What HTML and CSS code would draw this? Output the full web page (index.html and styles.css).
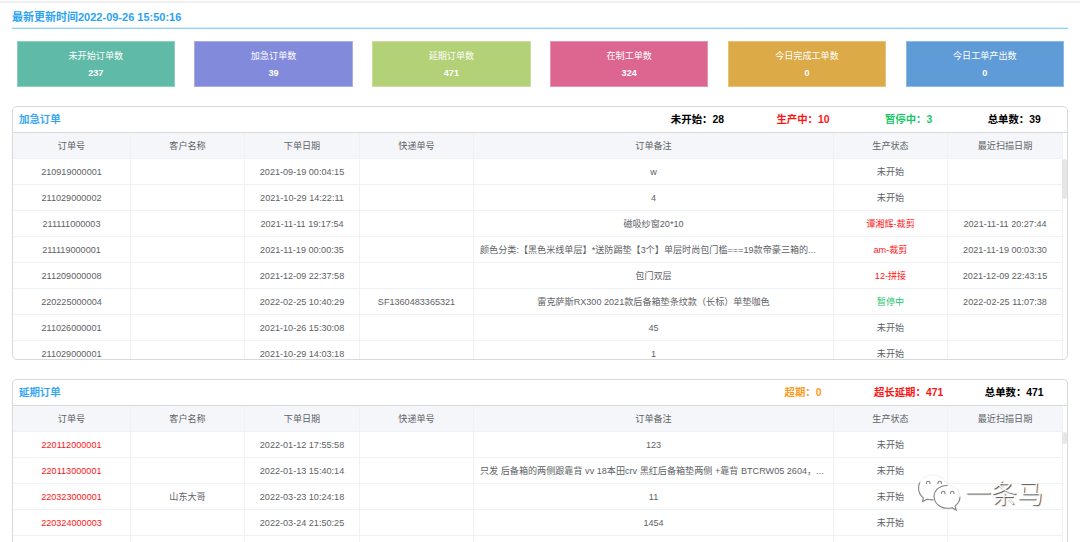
FILE: index.html
```html
<!DOCTYPE html>
<html lang="zh-CN">
<head>
  <meta charset="UTF-8">
  <title>订单看板</title>
  <link rel="stylesheet" href="styles.css">
</head>
<body>
  <div class="topline"></div>
  <h1 class="update-time">最新更新时间2022-09-26 15:50:16</h1>

  <div class="cards">
    <div class="card green"><span>未开始订单数</span><b>237</b></div>
    <div class="card purple"><span>加急订单数</span><b>39</b></div>
    <div class="card lime"><span>延期订单数</span><b>471</b></div>
    <div class="card pink"><span>在制工单数</span><b>324</b></div>
    <div class="card orange"><span>今日完成工单数</span><b>0</b></div>
    <div class="card blue"><span>今日工单产出数</span><b>0</b></div>
  </div>

  <!-- 加急订单 -->
  <div class="panel urgent">
    <div class="panel-head">
      <h2>加急订单</h2>
      <span class="total">未开始：28</span>
      <span class="total red">生产中：10</span>
      <span class="total ok">暂停中：3</span>
      <span class="total">总单数：39</span>
    </div>
    <table>
      <colgroup>
        <col class="c-no"><col class="c-name"><col class="c-date"><col class="c-name"><col class="c-note"><col class="c-name"><col class="c-date">
      </colgroup>
      <thead>
        <tr><th>订单号</th><th>客户名称</th><th>下单日期</th><th>快递单号</th><th>订单备注</th><th>生产状态</th><th>最近扫描日期</th></tr>
      </thead>
      <tbody>
        <tr><td>210919000001</td><td></td><td>2021-09-19 00:04:15</td><td></td><td>w</td><td>未开始</td><td></td></tr>
        <tr><td>211029000002</td><td></td><td>2021-10-29 14:22:11</td><td></td><td>4</td><td>未开始</td><td></td></tr>
        <tr><td>211111000003</td><td></td><td>2021-11-11 19:17:54</td><td></td><td>磁吸纱窗20*10</td><td class="red">谭湘辉-裁剪</td><td>2021-11-11 20:27:44</td></tr>
        <tr><td>211119000001</td><td></td><td>2021-11-19 00:00:35</td><td></td><td class="long">颜色分类:【黑色米线单层】*送防踢垫【3个】单层时尚包门槛===19款帝豪三箱的...</td><td class="red">am-裁剪</td><td>2021-11-19 00:03:30</td></tr>
        <tr><td>211209000008</td><td></td><td>2021-12-09 22:37:58</td><td></td><td>包门双层</td><td class="red">12-拼接</td><td>2021-12-09 22:43:15</td></tr>
        <tr><td>220225000004</td><td></td><td>2022-02-25 10:40:29</td><td>SF1360483365321</td><td>雷克萨斯RX300 2021款后备箱垫条纹款（长标）单垫咖色</td><td class="ok">暂停中</td><td>2022-02-25 11:07:38</td></tr>
        <tr><td>211026000001</td><td></td><td>2021-10-26 15:30:08</td><td></td><td>45</td><td>未开始</td><td></td></tr>
        <tr class="last"><td>211029000001</td><td></td><td>2021-10-29 14:03:18</td><td></td><td>1</td><td>未开始</td><td></td></tr>
      </tbody>
    </table>
    <div class="thumb"></div>
  </div>

  <!-- 延期订单 -->
  <div class="panel delayed">
    <div class="panel-head">
      <h2>延期订单</h2>
      <span class="total warn">超期：0</span>
      <span class="total red">超长延期：471</span>
      <span class="total">总单数：471</span>
    </div>
    <table>
      <colgroup>
        <col class="c-no"><col class="c-name"><col class="c-date"><col class="c-name"><col class="c-note"><col class="c-name"><col class="c-date">
      </colgroup>
      <thead>
        <tr><th>订单号</th><th>客户名称</th><th>下单日期</th><th>快递单号</th><th>订单备注</th><th>生产状态</th><th>最近扫描日期</th></tr>
      </thead>
      <tbody>
        <tr><td class="red">220112000001</td><td></td><td>2022-01-12 17:55:58</td><td></td><td>123</td><td>未开始</td><td></td></tr>
        <tr><td class="red">220113000001</td><td></td><td>2022-01-13 15:40:14</td><td></td><td class="long">只发 后备箱的两侧跟靠背 vv 18本田crv 黑红后备箱垫两侧 +靠背 BTCRW05 2604，...</td><td>未开始</td><td></td></tr>
        <tr><td class="red">220323000001</td><td>山东大哥</td><td>2022-03-23 10:24:18</td><td></td><td>11</td><td>未开始</td><td></td></tr>
        <tr><td class="red">220324000003</td><td></td><td>2022-03-24 21:50:25</td><td></td><td>1454</td><td>未开始</td><td></td></tr>
        <tr class="cut"><td></td><td></td><td></td><td></td><td></td><td></td><td></td></tr>
      </tbody>
    </table>
    <div class="thumb"></div>
  </div>

  <div class="watermark">
    <svg width="45" height="40" viewBox="0 0 45 40">
      <g class="bubble">
        <path d="M16 2C8 2 1.500 7.500 1.500 14.500c0 4 2 7.500 5.500 9.700L5.500 28.500l5-2.500c2 .6 4 .8 6 .7C30 26 31 21 30.500 13 29 6 23 2 16 2z"/>
        <path d="M30 12.500c-7.500 0-13 5-13 11.300S22.500 35.500 30 35.500c1.800 0 3.400-.3 5-.8l4.200 2.300-1.200-4c3-2.200 5-5.400 5-9.200 0-6.300-5.500-11.300-13-11.300z"/>
      </g>
      <path class="arc" d="M6.500 25c-3.500-2.500-5-6-5-10 0-2 .6-4 1.600-5.700M6.500 25l-1 3.500 5-2.300c2 .6 4 .8 6 .6M17.500 26c-2-7 3.500-13.500 13-13.500M17.300 25.500c1.200 6.500 8.700 11.500 17.700 9.200l4.200 2.300-1.200-4c3-2.200 5-5.400 5-9.200"/>
      <path class="eyes" d="M9.500 11v-1c0-2.400 3.500-2.400 3.500 0v1M21 11v-1c0-2.400 3.500-2.400 3.500 0v1M24.500 21v-1c0-2.400 3.500-2.400 3.500 0v1M33.500 21v-1c0-2.400 3.500-2.400 3.500 0v1"/>
    </svg>
    <span>一条马</span>
  </div>
</body>
</html>
```
FILE: styles.css
```css
* {
  box-sizing: border-box;
}
body {
  margin: 0;
  height: 542px;
  padding: 1px 12px 0;
  overflow: hidden;
  position: relative;
  background: #fff;
  color: #606266;
  font-family: "Liberation Sans", "Noto Sans CJK SC", sans-serif;
  font-size: 9.1px;
}
.topline {
  height: 2px;
  margin: 0 -12px;
  background: #f1f1f1;
}
.update-time {
  margin: 0;
  height: 26px;
  padding-top: 2px;
  border-bottom: 1px solid #8ed0fa;
  box-shadow: inset 0 -1px #d9f0fd;
  color: #2ba3f3;
  font-size: 11px;
  line-height: 25px;
}

/* 统计卡片 */
.cards {
  display: grid;
  grid-template-columns: repeat(6, 1fr);
  gap: 19.4px;
  padding: 12px 4px 0 4.600px;
}
.card {
  display: flex;
  flex-direction: column;
  align-items: center;
  height: 46px;
  padding-top: 6px;
  border: 1px solid rgba(255, 255, 255, 0.3);
  color: #fff;
  line-height: 17px;
}
.green { background: #5fbba8; }
.purple { background: #828bdb; }
.lime { background: #b3d176; }
.pink { background: #dd6690; }
.orange { background: #dcaa46; }
.blue { background: #5f9bd7; }

/* 订单表格 */
.panel {
  position: relative;
  overflow: hidden;
  border: 1px solid #d8d9da;
  border-radius: 5px;
}
.urgent {
  height: 254px;
  margin-top: 19px;
}
.delayed {
  height: 163px;
  margin-top: 19px;
  border-bottom: none;
  border-radius: 5px 5px 0 0;
}
.panel-head {
  display: flex;
  align-items: center;
  height: 26px;
  padding-bottom: 2px;
  border-bottom: 1px solid #d8d9da;
  font-size: 10.4px;
}
.panel-head h2 {
  flex: 1;
  margin: 0;
  padding-left: 6px;
  color: #2ba3f3;
  font-size: 10.4px;
  font-weight: 500;
  -webkit-text-stroke: 0.2px #2ba3f3;
}
.total {
  width: 105.6px;
  color: #000;
  font-weight: bold;
  text-align: center;
}
table {
  width: 1050px;
  table-layout: fixed;
  border-collapse: separate;
  border-spacing: 0;
}
.c-no { width: 118px; }
.c-name { width: 114px; }
.c-date { width: 115px; }
.c-note { width: 360px; }
th, td {
  height: 26px;
  padding: 0 6px;
  border-right: 1px solid #eff1f8;
  border-bottom: 1px solid #eff1f8;
  line-height: 14px;
  text-align: center;
  white-space: nowrap;
}
th {
  background: #f5f6fa;
  font-weight: normal;
}
.last td {
  height: 21px;
  padding-bottom: 1px;
  border-bottom: none;
  vertical-align: bottom;
}
.cut td {
  height: 6px;
  border-bottom: none;
}
.long {
  text-align: left;
}
.total.red, td.red { color: #ff1414; }
.total.ok, td.ok { color: #1bc76b; }
.total.warn { color: #ff9a1c; }
.thumb {
  position: absolute;
  top: 52px;
  right: 0;
  width: 5px;
  height: 40px;
  border-radius: 3px;
  background: #e6e6e6;
}
.delayed .thumb {
  height: 12px;
}

.watermark {
  position: absolute;
  left: 917px;
  top: 473px;
  display: flex;
  align-items: center;
  gap: 3px;
  color: #fff;
  font-family: "Noto Sans CJK SC", sans-serif;
  font-size: 26px;
  font-weight: 300;
  line-height: 40px;
  text-shadow: 1px 1px 1px #444;
}
.watermark span {
  margin-top: -2px;
}
.bubble {
  fill: #fff;
  stroke: #e4e4e4;
  stroke-width: 0.6;
}
.arc, .eyes {
  fill: none;
  stroke: #858585;
  stroke-width: 1.1;
}
```
